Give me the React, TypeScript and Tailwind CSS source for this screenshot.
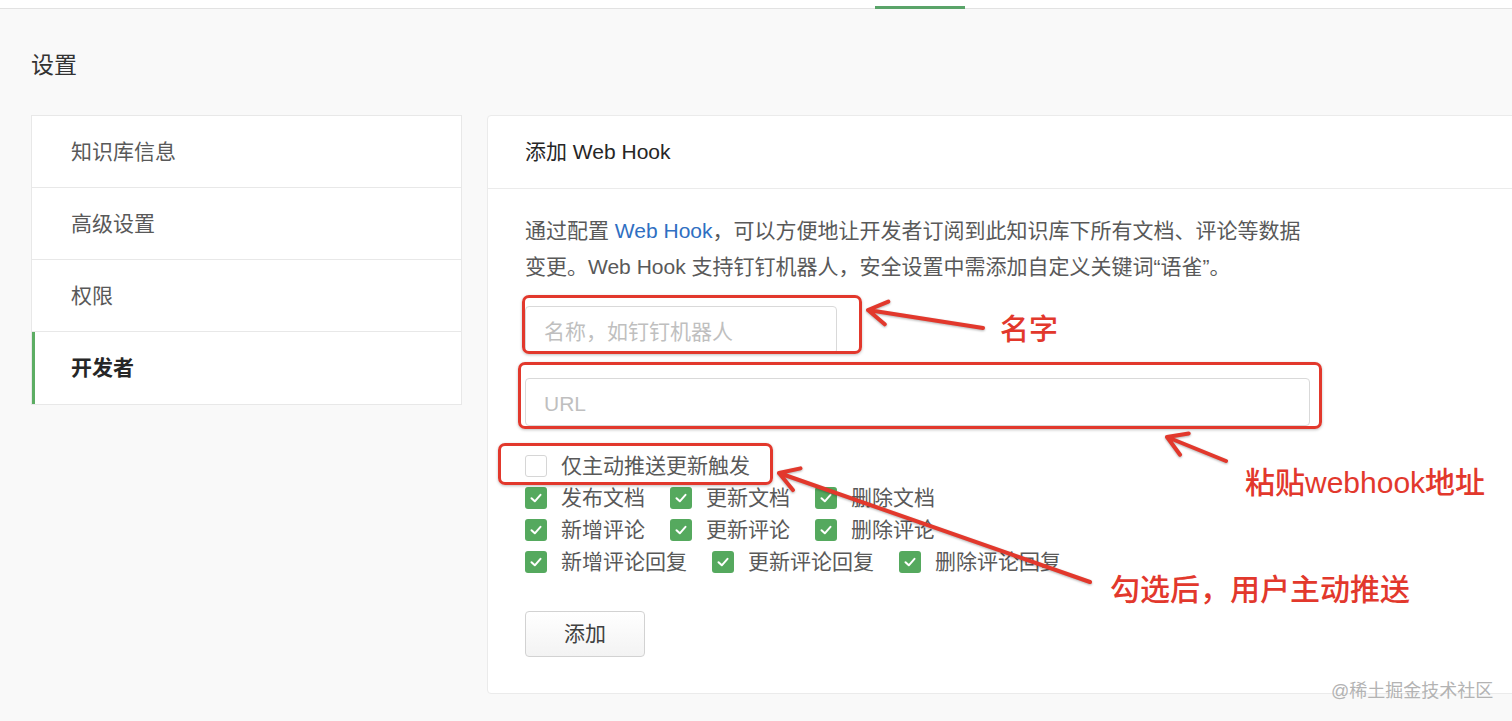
import React from 'react'

type Pt = { x1: number; y1: number; x2: number; y2: number }

// red annotation arrow, tail (x1,y1) -> tip (x2,y2)
function Arrow({ x1, y1, x2, y2 }: Pt) {
  const a = Math.atan2(y2 - y1, x2 - x1)
  const len = 22
  const s = 0.55
  const p1 = [x2 - len * Math.cos(a - s), y2 - len * Math.sin(a - s)]
  const p2 = [x2 - len * Math.cos(a + s), y2 - len * Math.sin(a + s)]
  return (
    <path
      d={`M${x1} ${y1} L${x2} ${y2} M${p1[0]} ${p1[1]} L${x2} ${y2} L${p2[0]} ${p2[1]}`}
      fill="none"
      stroke="#e2382c"
      strokeWidth={4}
      strokeLinecap="round"
      strokeLinejoin="round"
    />
  )
}

function Box({ checked }: { checked: boolean }) {
  if (!checked) {
    return <span className="w-[22px] h-[22px] shrink-0 rounded-[3px] border border-[#d6d6d6] bg-white" />
  }
  return (
    <span className="w-[22px] h-[22px] shrink-0 rounded-[3px] bg-[#55a95e] flex items-center justify-center">
      <svg width="14" height="14" viewBox="0 0 14 14">
        <polyline points="2.5,7.2 5.8,10.3 11.5,3.8" fill="none" stroke="#fff" strokeWidth="2" strokeLinecap="round" strokeLinejoin="round" />
      </svg>
    </span>
  )
}

function CheckItem({ label, checked = true }: { label: string; checked?: boolean }) {
  return (
    <label className="flex items-center mr-[25px]">
      <Box checked={checked} />
      <span className="ml-[14px] text-[21px] leading-[32px] text-[#595959] whitespace-nowrap">{label}</span>
    </label>
  )
}

const menu = ['知识库信息', '高级设置', '权限', '开发者']

const rows = [
  ['发布文档', '更新文档', '删除文档'],
  ['新增评论', '更新评论', '删除评论'],
  ['新增评论回复', '更新评论回复', '删除评论回复'],
]

export default function App() {
  return (
    <div className="relative w-[1512px] h-[721px] overflow-hidden bg-[#f9f9f9] font-['Liberation_Sans','Noto_Sans_CJK_SC',sans-serif]">
      {/* top nav strip */}
      <div className="h-[9px] bg-white border-b border-[#e2e2e2] flex items-end">
        <div className="ml-[875px] w-[90px] h-[3px] bg-[#5aa469] -mb-px" />
      </div>

      <div className="px-[31px]">
        <h1 className="mt-[40px] text-[23px] leading-[32px] text-[#333]">设置</h1>

        <div className="mt-[34px] flex gap-[25px]">
          {/* sidebar */}
          <div className="w-[431px] shrink-0 self-start bg-white border border-[#e8e8e8] divide-y divide-[#e8e8e8]">
            {menu.map((m, i) => {
              const active = i === menu.length - 1
              return (
                <div
                  key={m}
                  className={
                    active
                      ? 'h-[72px] pl-[39px] flex items-center text-[21px] font-bold text-[#262626] shadow-[inset_3px_0_0_#5cad63]'
                      : 'h-[72px] pl-[39px] flex items-center text-[21px] text-[#595959]'
                  }
                >
                  {m}
                </div>
              )
            })}
          </div>

          {/* card */}
          <div className="w-[1080px] shrink-0 bg-white border border-[#ebebeb] rounded-[4px]">
            <div className="h-[73px] px-[37px] flex items-center border-b border-[#ebebeb] text-[21px] text-[#262626]">
              添加 Web Hook
            </div>
            <div className="px-[37px] pt-[24px] pb-[36px]">
              <p className="text-[21px] leading-[36px] text-[#595959] whitespace-nowrap">
                通过配置 <span className="text-[#2f6fc2]">Web Hook</span>，可以方便地让开发者订阅到此知识库下所有文档、评论等数据
                <br />
                变更。Web Hook 支持钉钉机器人，安全设置中需添加自定义关键词“语雀”。
              </p>

              <input
                className="mt-[21px] block w-[312px] h-[48px] px-[18px] pt-[3px] rounded-[4px] border border-[#d9d9d9] text-[21px] text-[#333] placeholder:text-[#bfbfbf] outline-none"
                placeholder="名称，如钉钉机器人"
              />
              <input
                className="mt-[24px] block w-[785px] h-[48px] px-[18px] pt-[4px] rounded-[4px] border border-[#d9d9d9] text-[21px] text-[#333] placeholder:text-[#bfbfbf] outline-none"
                placeholder="URL"
              />

              <div className="mt-[24px]">
                <div className="h-[32px] flex items-center">
                  <CheckItem label="仅主动推送更新触发" checked={false} />
                </div>
                {rows.map((r) => (
                  <div key={r[0]} className="h-[32px] flex items-center">
                    {r.map((l) => (
                      <CheckItem key={l} label={l} />
                    ))}
                  </div>
                ))}
              </div>

              <button className="mt-[33px] w-[120px] h-[46px] rounded-[4px] border border-[#d2d2d2] bg-gradient-to-b from-white to-[#f3f3f3] text-[21px] text-[#404040]">
                添加
              </button>
            </div>
          </div>
        </div>
      </div>

      {/* annotations */}
      <div className="absolute left-[522px] top-[295px] w-[340px] h-[59px] border-[3px] border-[#e2382c] rounded-[7px] shadow-[0_1px_3px_rgba(0,0,0,0.25)]" />
      <div className="absolute left-[518px] top-[362px] w-[804px] h-[67px] border-[3px] border-[#e2382c] rounded-[7px] shadow-[0_1px_3px_rgba(0,0,0,0.25)]" />
      <div className="absolute left-[498px] top-[443px] w-[275px] h-[42px] border-[3px] border-[#e2382c] rounded-[7px] shadow-[0_1px_3px_rgba(0,0,0,0.25)]" />

      <svg className="absolute left-0 top-0 pointer-events-none drop-shadow-[0_1px_1px_rgba(0,0,0,0.3)]" width="1512" height="721">
        <Arrow x1={983} y1={328} x2={868} y2={310} />
        <Arrow x1={1226} y1={461} x2={1167} y2={437} />
        <Arrow x1={1090} y1={582} x2={779} y2={473} />
      </svg>

      <div className="absolute left-[1000px] top-[310px] text-[29px] leading-[40px] font-medium text-[#e2382c]">名字</div>
      <div className="absolute left-[1245px] top-[463px] text-[30px] leading-[40px] font-medium text-[#e2382c] whitespace-nowrap">粘贴webhook地址</div>
      <div className="absolute left-[1110px] top-[570px] text-[30px] leading-[40px] font-medium text-[#e2382c] whitespace-nowrap">勾选后，用户主动推送</div>

      <div className="absolute left-[1331px] top-[678px] text-[18px] leading-[26px] text-[#b3b3b3] whitespace-nowrap">@稀土掘金技术社区</div>
    </div>
  )
}
